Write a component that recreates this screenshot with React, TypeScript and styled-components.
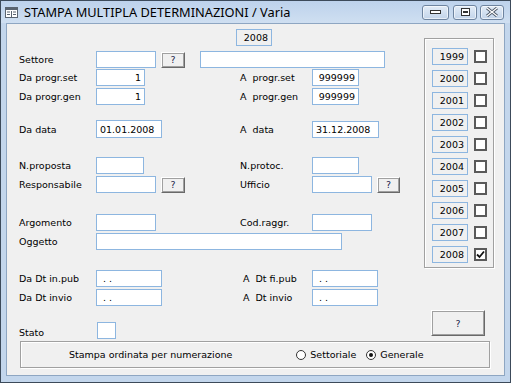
import React from 'react';
import styled, { createGlobalStyle } from 'styled-components';

const Global = createGlobalStyle`
  html, body { margin: 0; padding: 0; background: #ffffff; }
  body { font-family: "DejaVu Sans", Tahoma, sans-serif; font-size: 9.5px; color: #000; }
`;

const Window = styled.div`
  width: 511px;
  height: 383px;
  box-sizing: border-box;
  border: 1px solid #3c4a5a;
  background: #c3d6ec;
  padding: 0 5px 6px 5px;
  display: flex;
  flex-direction: column;
`;

const TitleBar = styled.div`
  height: 22px;
  margin: 0 -5px;
  padding: 0 6px 0 4px;
  display: flex;
  align-items: center;
  background: linear-gradient(#bdd2ec, #cfdff1);
`;

const TitleText = styled.span`
  font-family: "Noto Sans", "Open Sans", sans-serif;
  font-size: 12.8px;
  margin-left: 6px;
  flex: 1;
  white-space: nowrap;
`;

const CaptionButton = styled.div<{ $w: number; $ml?: number }>`
  width: ${p => p.$w}px;
  height: 15px;
  box-sizing: border-box;
  border: 1px solid #6e84a0;
  border-radius: 3px;
  background: linear-gradient(#e3ecf7, #c2d4ea);
  margin-left: ${p => p.$ml ?? 4}px;
  display: flex;
  align-items: center;
  justify-content: center;
  box-shadow: inset 0 0 0 1px rgba(255,255,255,0.6);
`;

const Client = styled.div`
  flex: 1;
  background: #f0f0f0;
  border: 1px solid #8ea6c2;
  padding: 5px 0 0 12px;
  display: flex;
  flex-direction: column;
`;

const Main = styled.div`
  display: flex;
`;

const LeftCol = styled.div`
  width: 405px;
`;

const RightCol = styled.div`
  display: flex;
  flex-direction: column;
`;

const Row = styled.div<{ $mt: number }>`
  display: grid;
  grid-template-columns: 77px 144px 72px 1fr;
  align-items: center;
  height: 17px;
  margin-top: ${p => p.$mt}px;
`;

const Label = styled.span`
  white-space: nowrap;
`;

const Cell = styled.div<{ $span?: boolean }>`
  display: flex;
  align-items: center;
  ${p => (p.$span ? 'grid-column: 2 / 5;' : '')}
`;

const Field = styled.div<{ $w: number; $right?: boolean; $h?: number }>`
  width: ${p => p.$w}px;
  height: ${p => p.$h ?? 17}px;
  box-sizing: border-box;
  border: 1px solid #8db6e0;
  background: #ffffff;
  padding: 0 3px;
  display: flex;
  align-items: center;
  justify-content: ${p => (p.$right ? 'flex-end' : 'flex-start')};
  white-space: nowrap;
`;

const Display = styled(Field)`
  background: #f0f0f0;
`;

const QButton = styled.div<{ $w?: number; $h?: number; $ml?: number }>`
  width: ${p => p.$w ?? 24}px;
  height: ${p => p.$h ?? 16}px;
  margin-left: ${p => p.$ml ?? 5}px;
  box-sizing: border-box;
  background: #f0f0f0;
  border-top: 1px solid #ffffff;
  border-left: 1px solid #ffffff;
  border-right: 1px solid #696969;
  border-bottom: 1px solid #696969;
  box-shadow: 1px 1px 0 #a0a0a0 inset, -1px -1px 0 #a0a0a0 inset;
  display: flex;
  align-items: center;
  justify-content: center;
  color: #1a1a4a;
`;

const YearTop = styled.div`
  margin-left: 217px;
  height: 17px;
  display: flex;
`;

const YearGroup = styled.div`
  margin-top: 9px;
  width: 70px;
  height: 230px;
  box-sizing: border-box;
  border: 1px solid #a0a0a0;
  box-shadow: inset 1px 1px 0 #ffffff, 1px 1px 0 #ffffff;
  padding: 9px 0 0 7px;
  display: flex;
  flex-direction: column;
  gap: 5px;
`;

const YearItem = styled.div`
  display: flex;
  align-items: center;
  height: 17px;
`;

const Check = styled.div`
  width: 13px;
  height: 13px;
  box-sizing: border-box;
  border: 2px solid #5a5a5a;
  background: #ffffff;
  margin-left: 6px;
  display: flex;
  align-items: center;
  justify-content: center;
`;

const BottomGroup = styled.div`
  margin: 2px 0 0 1px;
  width: 470px;
  height: 27px;
  box-sizing: border-box;
  border: 1px solid #a0a0a0;
  box-shadow: inset 1px 1px 0 #ffffff, 1px 1px 0 #ffffff;
  display: flex;
  align-items: center;
  padding-left: 48px;
`;

const Radio = styled.span<{ $on?: boolean }>`
  width: 10px;
  height: 10px;
  box-sizing: border-box;
  border: 1.5px solid #333;
  border-radius: 50%;
  background: #fff;
  display: inline-flex;
  align-items: center;
  justify-content: center;
  margin-right: 4px;
  &::after {
    content: '';
    width: 4px;
    height: 4px;
    border-radius: 50%;
    background: ${p => (p.$on ? '#111' : 'transparent')};
  }
`;

const RadioOpt = styled.span<{ $ml: number }>`
  display: inline-flex;
  align-items: center;
  margin-left: ${p => p.$ml}px;
`;

const years = ['1999', '2000', '2001', '2002', '2003', '2004', '2005', '2006', '2007', '2008'];

const WinIcon = () => (
  <svg width="13" height="11" viewBox="0 0 13 11">
    <rect x="0.5" y="0.5" width="12" height="10" fill="#fff" stroke="#5a6470" />
    <rect x="1" y="1" width="11" height="2" fill="#5a6470" />
    <line x1="2" y1="5" x2="5" y2="5" stroke="#5a6470" />
    <line x1="2" y1="7.5" x2="5" y2="7.5" stroke="#5a6470" />
    <line x1="6.5" y1="4" x2="6.5" y2="10" stroke="#5a6470" />
    <line x1="8" y1="5" x2="11" y2="5" stroke="#5a6470" />
    <line x1="8" y1="7.5" x2="11" y2="7.5" stroke="#5a6470" />
  </svg>
);

const App = () => {
  return (
    <>
      <Global />
      <Window>
        <TitleBar>
          <WinIcon />
          <TitleText>STAMPA MULTIPLA DETERMINAZIONI / Varia</TitleText>
          <CaptionButton $w={27}>
            <svg width="11" height="4"><rect x="0.5" y="0.5" width="10" height="3" fill="#fff" stroke="#333" /></svg>
          </CaptionButton>
          <CaptionButton $w={24}>
            <svg width="9" height="8"><rect x="0.5" y="0.5" width="8" height="7" fill="#fff" stroke="#333" /><rect x="2" y="3" width="5" height="2" fill="#333" /></svg>
          </CaptionButton>
          <CaptionButton $w={24} $ml={3}>
            <svg width="12" height="10" viewBox="0 0 12 10">
              <path d="M1 1 L11 9 M11 1 L1 9" stroke="#4a5564" strokeWidth="3" />
              <path d="M1 1 L11 9 M11 1 L1 9" stroke="#ffffff" strokeWidth="1.2" />
            </svg>
          </CaptionButton>
        </TitleBar>
        <Client>
          <Main>
            <LeftCol>
              <YearTop>
                <Display $w={36} $right>2008</Display>
              </YearTop>

              <Row $mt={5}>
                <Label>Settore</Label>
                <Cell $span>
                  <Field $w={60} />
                  <QButton>?</QButton>
                  <Field $w={185} style={{ marginLeft: 15 }} />
                </Cell>
              </Row>
              <Row $mt={1}>
                <Label>Da progr.set</Label>
                <Cell><Field $w={49} $right>1</Field></Cell>
                <Label>A&nbsp; progr.set</Label>
                <Cell><Field $w={47} $right>999999</Field></Cell>
              </Row>
              <Row $mt={2}>
                <Label>Da progr.gen</Label>
                <Cell><Field $w={49} $right>1</Field></Cell>
                <Label>A&nbsp; progr.gen</Label>
                <Cell><Field $w={47} $right>999999</Field></Cell>
              </Row>

              <Row $mt={15}>
                <Label>Da data</Label>
                <Cell><Field $w={66} $h={18}>01.01.2008</Field></Cell>
                <Label>A&nbsp; data</Label>
                <Cell><Field $w={67}>31.12.2008</Field></Cell>
              </Row>

              <Row $mt={20}>
                <Label>N.proposta</Label>
                <Cell><Field $w={48} /></Cell>
                <Label>N.protoc.</Label>
                <Cell><Field $w={47} /></Cell>
              </Row>
              <Row $mt={2}>
                <Label>Responsabile</Label>
                <Cell><Field $w={60} /><QButton>?</QButton></Cell>
                <Label>Ufficio</Label>
                <Cell><Field $w={60} /><QButton $w={23}>?</QButton></Cell>
              </Row>

              <Row $mt={21}>
                <Label>Argomento</Label>
                <Cell><Field $w={60} /></Cell>
                <Label>Cod.raggr.</Label>
                <Cell><Field $w={60} /></Cell>
              </Row>
              <Row $mt={2}>
                <Label>Oggetto</Label>
                <Cell $span><Field $w={246} /></Cell>
              </Row>

              <Row $mt={20}>
                <Label>Da Dt in.pub</Label>
                <Cell><Field $w={66}>&nbsp;. .</Field></Cell>
                <Label>&nbsp;A&nbsp; Dt fi.pub</Label>
                <Cell><Field $w={66}>&nbsp;. .</Field></Cell>
              </Row>
              <Row $mt={2}>
                <Label>Da Dt invio</Label>
                <Cell><Field $w={66}>&nbsp;. .</Field></Cell>
                <Label>&nbsp;A&nbsp; Dt invio</Label>
                <Cell><Field $w={66}>&nbsp;. .</Field></Cell>
              </Row>

              <Row $mt={16}>
                <Label style={{ marginTop: 4 }}>Stato</Label>
                <Cell><Field $w={19} style={{ marginLeft: 1 }} /></Cell>
              </Row>
            </LeftCol>
            <RightCol>
              <YearGroup>
                {years.map(y => (
                  <YearItem key={y}>
                    <Display $w={36} $right>{y}</Display>
                    <Check>
                      {y === '2008' && (
                        <svg width="9" height="9" viewBox="0 0 9 9">
                          <path d="M1 4.5 L3.5 7 L8 1.5" stroke="#111" strokeWidth="1.8" fill="none" />
                        </svg>
                      )}
                    </Check>
                  </YearItem>
                ))}
              </YearGroup>
              <QButton $w={54} $h={26} $ml={7} style={{ marginTop: 42 }}>?</QButton>
            </RightCol>
          </Main>
          <BottomGroup>
            <span>Stampa ordinata per numerazione</span>
            <RadioOpt $ml={64}><Radio />Settoriale</RadioOpt>
            <RadioOpt $ml={10}><Radio $on />Generale</RadioOpt>
          </BottomGroup>
        </Client>
      </Window>
    </>
  );
};

export default App;
